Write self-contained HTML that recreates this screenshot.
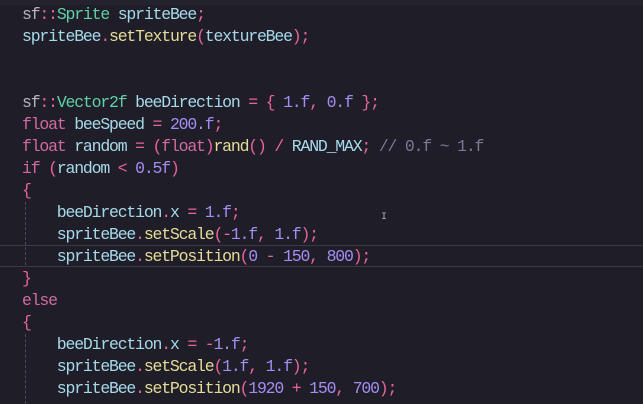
<!DOCTYPE html><html><head><style>
body{margin:0;width:643px;height:404px;background:#1f1e28;overflow:hidden;position:relative;font-family:"Liberation Mono",monospace;font-size:16.5px;letter-spacing:-1.2px}
.top{position:absolute;left:0;top:0;width:643px;height:5px;background:#24232d}
.l{position:absolute;left:22px;white-space:pre;color:#a6d9ea;line-height:22px}
.p{color:#e8639a}.g{color:#b8b6bc}.t{color:#5fd0a8}.k{color:#d16aa0}.n{color:#a48cf2}.f{color:#e6dc98}.c{color:#7a7895}
.cur{position:absolute;left:0;top:245px;width:643px;height:20px;border-top:1px solid #3a3944;border-bottom:1px solid #3a3944}
.guide{position:absolute;left:25px;border-left:1px dashed #4a4956;width:0}
</style></head><body>
<div class="top"></div>
<div class="cur"></div>
<div class="guide" style="top:202px;height:63px"></div>
<div class="guide" style="top:334px;height:70px"></div>
<div class="l" style="top:4px"><span class="g">sf</span><span class="p">::</span><span class="t">Sprite</span> spriteBee<span class="p">;</span></div>
<div class="l" style="top:26px">spriteBee<span class="p">.</span><span class="f">setTexture</span><span class="p">(</span>textureBee<span class="p">);</span></div>
<div class="l" style="top:92px"><span class="g">sf</span><span class="p">::</span><span class="t">Vector2f</span> beeDirection <span class="p">=</span> <span class="p">{</span> <span class="n">1.f</span><span class="p">,</span> <span class="n">0.f</span> <span class="p">};</span></div>
<div class="l" style="top:114px"><span class="k">float</span> beeSpeed <span class="p">=</span> <span class="n">200.f</span><span class="p">;</span></div>
<div class="l" style="top:136px"><span class="k">float</span> random <span class="p">=</span> <span class="p">(</span><span class="k">float</span><span class="p">)</span><span class="f">rand</span><span class="p">()</span> <span class="p">/</span> RAND_MAX<span class="p">;</span> <span class="c">// 0.f ~ 1.f</span></div>
<div class="l" style="top:158px"><span class="k">if</span> <span class="p">(</span>random <span class="p">&lt;</span> <span class="n">0.5f</span><span class="p">)</span></div>
<div class="l" style="top:180px"><span class="p">{</span></div>
<div class="l" style="top:202px">    beeDirection<span class="p">.</span>x <span class="p">=</span> <span class="n">1.f</span><span class="p">;</span></div>
<div class="l" style="top:224px">    spriteBee<span class="p">.</span><span class="f">setScale</span><span class="p">(-</span><span class="n">1.f</span><span class="p">,</span> <span class="n">1.f</span><span class="p">);</span></div>
<div class="l" style="top:246px">    spriteBee<span class="p">.</span><span class="f">setPosition</span><span class="p">(</span><span class="n">0</span> <span class="p">-</span> <span class="n">150</span><span class="p">,</span> <span class="n">800</span><span class="p">);</span></div>
<div class="l" style="top:268px"><span class="p">}</span></div>
<div class="l" style="top:290px"><span class="k">else</span></div>
<div class="l" style="top:312px"><span class="p">{</span></div>
<div class="l" style="top:334px">    beeDirection<span class="p">.</span>x <span class="p">=</span> <span class="p">-</span><span class="n">1.f</span><span class="p">;</span></div>
<div class="l" style="top:356px">    spriteBee<span class="p">.</span><span class="f">setScale</span><span class="p">(</span><span class="n">1.f</span><span class="p">,</span> <span class="n">1.f</span><span class="p">);</span></div>
<div class="l" style="top:378px">    spriteBee<span class="p">.</span><span class="f">setPosition</span><span class="p">(</span><span class="n">1920</span> <span class="p">+</span> <span class="n">150</span><span class="p">,</span> <span class="n">700</span><span class="p">);</span></div>
<div style="position:absolute;left:381px;top:212px;color:#aaa;font-size:10px;letter-spacing:0">I</div>
</body></html>
